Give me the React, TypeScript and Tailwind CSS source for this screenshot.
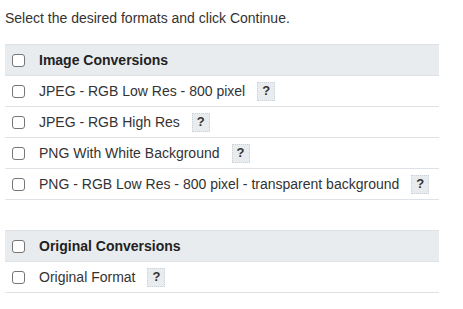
import React from 'react';

const Help = () => (
  <span className="ml-3 inline-flex h-[19px] w-[18px] items-center justify-center border border-dotted border-[#c9d0d6] bg-[#e9ecef] text-[13px] font-bold text-[#333]">
    ?
  </span>
);

const Box = () => (
  <span className="inline-block h-[13px] w-[13px] shrink-0 rounded-[3px] border border-[#767676] bg-white" />
);

const Header = ({ title }: { title: string }) => (
  <div className="flex h-[32px] items-center border-y border-[#dee2e6] bg-[#e9ecef] pl-[7px]">
    <Box />
    <span className="ml-[14px] text-[14px] font-bold text-[#222]">{title}</span>
  </div>
);

const Row = ({ label }: { label: string }) => (
  <div className="flex h-[31px] items-center border-b border-[#dee2e6] pl-[7px]">
    <Box />
    <span className="ml-[14px] text-[14px] text-[#333]">{label}</span>
    <Help />
  </div>
);

export default function App() {
  return (
    <div className="h-[309px] w-[463px] bg-white px-[5px] pt-[8px]" style={{ fontFamily: '"Liberation Sans", Arial, sans-serif' }}>
      <p className="text-[14px] leading-[20px] text-[#333]">Select the desired formats and click Continue.</p>
      <div className="mt-[16px] w-[434px]">
        <Header title="Image Conversions" />
        <Row label="JPEG - RGB Low Res - 800 pixel" />
        <Row label="JPEG - RGB High Res" />
        <Row label="PNG With White Background" />
        <Row label="PNG - RGB Low Res - 800 pixel - transparent background" />
      </div>
      <div className="mt-[30px] w-[434px]">
        <Header title="Original Conversions" />
        <Row label="Original Format" />
      </div>
    </div>
  );
}
